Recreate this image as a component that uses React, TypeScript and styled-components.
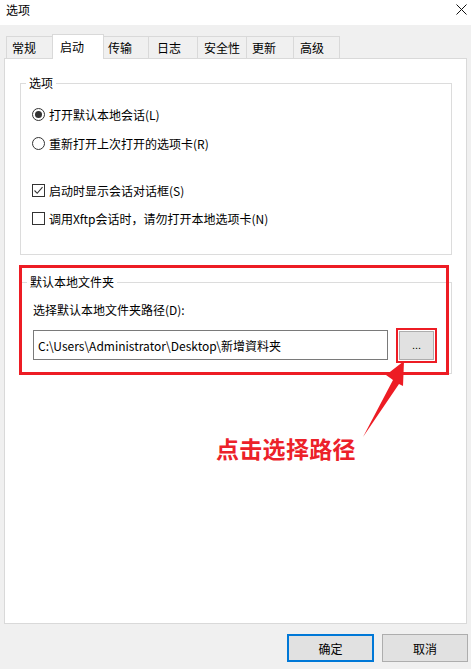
import React from "react";
import styled, { createGlobalStyle } from "styled-components";

const Global = createGlobalStyle`
  html, body { margin: 0; padding: 0; background: #f0f0f0; }
  body {
    font-family: "Noto Sans CJK SC", "Noto Sans", "Liberation Sans", sans-serif;
    font-size: 12px;
    color: #000;
  }
  * { box-sizing: border-box; }
`;

const Window = styled.div`
  width: 471px;
  height: 669px;
  display: flex;
  flex-direction: column;
  background: #f0f0f0;
  overflow: hidden;
`;

const TitleBar = styled.div`
  flex: none;
  height: 25px;
  background: #fff;
  display: flex;
  align-items: flex-start;
  justify-content: space-between;
  padding-left: 6px;
`;

const Title = styled.span`
  line-height: 20px;
`;

const CloseButton = styled.div`
  width: 20px;
  height: 18px;
  display: flex;
  align-items: center;
  justify-content: center;
`;

const Body = styled.div`
  flex: 1;
  display: flex;
  flex-direction: column;
  padding: 9px 4px 0 4px;
`;

const TabStrip = styled.div`
  height: 25px;
  display: flex;
  align-items: flex-end;
  padding-left: 2px;
`;

const Tab = styled.div<{ $w: number; $pl: number; $active?: boolean }>`
  position: relative;
  z-index: ${(p) => (p.$active ? 2 : 1)};
  width: ${(p) => p.$w}px;
  height: ${(p) => (p.$active ? 25 : 22)}px;
  margin-bottom: ${(p) => (p.$active ? 0 : 1)}px;
  margin-left: -1px;
  &:first-child { margin-left: 0; }
  border: 1px solid #d9d9d9;
  border-bottom: none;
  background: ${(p) => (p.$active ? "#fff" : "#f0f0f0")};
  padding-left: ${(p) => p.$pl}px;
  padding-bottom: ${(p) => (p.$active ? 2 : 0)}px;
  display: flex;
  align-items: center;
  white-space: nowrap;
`;

const Panel = styled.div`
  position: relative;
  width: 463px;
  height: 566px;
  margin-top: -1px;
  background: #fff;
  border: 1px solid #d9d9d9;
  padding: 16px 14px 0 15px;
`;

const Group = styled.fieldset<{ $mt?: number; $pt: number; $pb: number; $pl: number }>`
  margin: ${(p) => p.$mt ?? 0}px 0 0 0;
  min-width: 0;
  width: 432px;
  border: 1px solid #dcdcdc;
  padding: ${(p) => p.$pt}px 12px ${(p) => p.$pb}px ${(p) => p.$pl}px;
`;

const Legend = styled.legend`
  line-height: 16px;
  padding: 0 3px;
  margin-left: -6px;
`;

const OptionRow = styled.label<{ $mt?: number }>`
  display: flex;
  align-items: center;
  gap: 4px;
  height: 20px;
  margin-top: ${(p) => p.$mt ?? 0}px;
  white-space: nowrap;
`;

const RadioCircle = styled.span<{ $checked?: boolean }>`
  flex: none;
  width: 13px;
  height: 13px;
  border-radius: 50%;
  border: 1px solid #333;
  background: #fff;
  display: flex;
  align-items: center;
  justify-content: center;
  &::after {
    content: "";
    display: ${(p) => (p.$checked ? "block" : "none")};
    width: 7px;
    height: 7px;
    border-radius: 50%;
    background: #333;
  }
`;

const CheckSquare = styled.span`
  flex: none;
  width: 13px;
  height: 13px;
  border: 1px solid #333;
  background: #fff;
  display: flex;
  align-items: center;
  justify-content: center;
`;

const FieldLabel = styled.div`
  height: 20px;
  line-height: 20px;
  white-space: nowrap;
`;

const FieldRow = styled.div`
  margin-top: 10px;
  display: flex;
  align-items: flex-end;
  height: 30px;
`;

const PathInput = styled.div`
  width: 355px;
  height: 30px;
  border: 1px solid #7a7a7a;
  background: #fff;
  padding-left: 4px;
  display: flex;
  align-items: center;
  white-space: nowrap;
`;

const BrowseButton = styled.div`
  margin-left: 11px;
  width: 35px;
  height: 29px;
  border: 1px solid #adadad;
  background: #e1e1e1;
  outline: 2px solid #ed1c24;
  outline-offset: 1px;
  display: flex;
  align-items: center;
  justify-content: center;
  font-family: "Liberation Sans", sans-serif;
  font-size: 11px;
  padding-bottom: 1px;
`;

const HighlightBox = styled.div`
  position: absolute;
  left: 14px;
  top: 206px;
  width: 430px;
  height: 110px;
  border: 3px solid #ed1c24;
  pointer-events: none;
`;

const ArrowSvg = styled.svg`
  position: absolute;
  left: 350px;
  top: 296px;
  pointer-events: none;
`;

const Callout = styled.div`
  position: absolute;
  left: 211px;
  top: 378px;
  font-size: 23px;
  line-height: 23px;
  font-weight: 700;
  color: #ec2129;
  letter-spacing: 0.3px;
  white-space: nowrap;
`;

const ButtonBar = styled.div`
  display: flex;
  justify-content: flex-end;
  gap: 8px;
  margin-top: 10px;
  margin-right: -1px;
`;

const DialogButton = styled.div<{ $primary?: boolean; $w: number }>`
  width: ${(p) => p.$w}px;
  height: 28px;
  background: #e1e1e1;
  border: ${(p) => (p.$primary ? "2px solid #0078d7" : "1px solid #adadad")};
  display: flex;
  align-items: center;
  justify-content: center;
`;

const tabs = [
  { t: "常规", w: 47, pl: 5 },
  { t: "启动", w: 52, pl: 7, active: true },
  { t: "传输", w: 46, pl: 4 },
  { t: "日志", w: 50, pl: 8 },
  { t: "安全性", w: 50, pl: 6 },
  { t: "更新", w: 48, pl: 5 },
  { t: "高级", w: 47, pl: 6 },
];

export default function App() {
  return (
    <Window>
      <Global />
      <TitleBar>
        <Title>选项</Title>
        <CloseButton>
          <svg width="11" height="11" viewBox="0 0 11 11">
            <path d="M0.5 0.5 L10.5 10.5 M10.5 0.5 L0.5 10.5" stroke="#111" strokeWidth="1" fill="none" />
          </svg>
        </CloseButton>
      </TitleBar>
      <Body>
        <TabStrip>
          {tabs.map((t) => (
            <Tab key={t.t} $w={t.w} $pl={t.pl} $active={t.active}>
              {t.t}
            </Tab>
          ))}
        </TabStrip>
        <Panel>
          <Group $pt={13} $pb={26} $pl={11}>
            <Legend>选项</Legend>
            <OptionRow>
              <RadioCircle $checked />
              打开默认本地会话(L)
            </OptionRow>
            <OptionRow $mt={9}>
              <RadioCircle />
              重新打开上次打开的选项卡(R)
            </OptionRow>
            <OptionRow $mt={27}>
              <CheckSquare>
                <svg width="11" height="11" viewBox="0 0 11 11">
                  <path d="M1.5 5.5 L4.2 8.3 L9.5 2.2" stroke="#333" strokeWidth="1.1" fill="none" />
                </svg>
              </CheckSquare>
              启动时显示会话对话框(S)
            </OptionRow>
            <OptionRow $mt={8}>
              <CheckSquare />
              调用Xftp会话时，请勿打开本地选项卡(N)
            </OptionRow>
          </Group>
          <Group $mt={19} $pt={10} $pb={13} $pl={12}>
            <Legend>默认本地文件夹</Legend>
            <FieldLabel>选择默认本地文件夹路径(D):</FieldLabel>
            <FieldRow>
              <PathInput>C:\Users\Administrator\Desktop\新增資料夹</PathInput>
              <BrowseButton>...</BrowseButton>
            </FieldRow>
          </Group>
          <HighlightBox />
          <ArrowSvg width="55" height="85" viewBox="355 355 55 85">
            <polygon
              points="404,361 403,386 399,384 363,437 393,380 386,375"
              fill="#ed1c24"
            />
          </ArrowSvg>
          <Callout>点击选择路径</Callout>
        </Panel>
        <ButtonBar>
          <DialogButton $primary $w={87}>确定</DialogButton>
          <DialogButton $w={86}>取消</DialogButton>
        </ButtonBar>
      </Body>
    </Window>
  );
}
